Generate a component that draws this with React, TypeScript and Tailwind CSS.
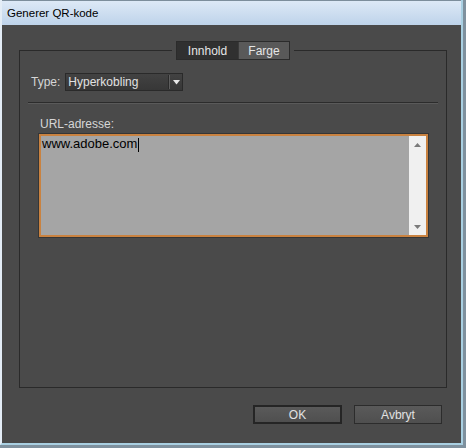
import React from "react";

export default function App() {
  return (
    <div className="w-[466px] h-[448px] bg-[#7f919e] font-['Liberation_Sans',Arial,sans-serif] text-[12px]">
      <div className="w-[463px] h-[445px] flex flex-col border-l-2 border-r-2 border-b-2 border-l-[#e4edf6] border-r-[#a9d0e2] border-b-[#a9d0e2]">
        <div className="h-[25px] shrink-0 flex items-center pl-[5px] pt-[2px] bg-gradient-to-b from-[#dde9f6] to-[#bed3ea] border-t border-t-[#7d8e9c] text-black text-[11.5px]">
          Generer QR-kode
        </div>
        <div className="flex-1 bg-[#4a4a4a] flex flex-col pt-[16px] pl-[17px] pr-[14px]">
          <fieldset className="h-[347px] border border-[#2a2a2a] text-[#d6d6d6]">
            <legend className="mx-auto px-[4px]">
              <div className="flex h-[19px] border border-[#2b2b2b]">
                <div className="w-[61px] flex items-center justify-center bg-[#303030] text-[#e6e6e6]">
                  Innhold
                </div>
                <div className="w-[51px] flex items-center justify-center bg-[#595959] border-l border-[#3a3a3a] text-[#e6e6e6]">
                  Farge
                </div>
              </div>
            </legend>
            <div className="mt-[13px] pl-[11px] flex items-center h-[18px] gap-[5px]">
              <span className="leading-[14px]">Type:</span>
              <div className="w-[118px] h-[18px] border border-[#2a2a2a] bg-gradient-to-b from-[#424242] to-[#373737] flex items-center">
                <span className="flex-1 pl-[2px] text-[#e2e2e2] leading-[14px]">Hyperkobling</span>
                <div className="w-px h-[14px] bg-[#2a2a2a]" />
                <div className="w-px h-[14px] bg-[#5e5e5e]" />
                <div className="w-[12px] flex items-center justify-center">
                  <svg width="7" height="5" viewBox="0 0 7 5">
                    <path d="M0 0 L7 0 L3.5 4.5 Z" fill="#e8e8e8" />
                  </svg>
                </div>
              </div>
            </div>
            <div className="mt-[11px] mx-[8px] h-[2px] border-t border-t-[#2c2c2c] border-b border-b-[#5a5a5a]" />
            <div className="mt-[13px] pl-[20px] leading-[14px]">URL-adresse:</div>
            <div className="mt-[2px] ml-[18px] w-[391px] h-[105px] border border-[#363636]">
              <div className="w-full h-full border-2 border-[#c98240] flex">
                <div className="flex-1 bg-[#a5a5a5] text-black text-[13px] leading-[15px] pl-[1px]">
                  www.adobe.com
                  <span className="inline-block w-px h-[14px] bg-black align-middle ml-[1px]" />
                </div>
                <div className="w-[17px] bg-[#f0f0f0] flex flex-col items-center justify-between pt-[7px] pb-[6px]">
                  <svg width="7" height="4" viewBox="0 0 7 4">
                    <path d="M0 4 L7 4 L3.5 0 Z" fill="#7a7a7a" />
                  </svg>
                  <svg width="7" height="4" viewBox="0 0 7 4">
                    <path d="M0 0 L7 0 L3.5 4 Z" fill="#7a7a7a" />
                  </svg>
                </div>
              </div>
            </div>
          </fieldset>
          <div className="flex justify-end gap-[12px] mt-[17px] pr-[5px]">
            <button className="w-[89px] h-[19px] border-2 border-[#252525] bg-gradient-to-b from-[#5a5a5a] to-[#4f4f4f] text-[#e2e2e2] flex items-center justify-center leading-[14px]">
              OK
            </button>
            <button className="w-[88px] h-[19px] border border-[#2c2c2c] bg-gradient-to-b from-[#5a5a5a] to-[#4f4f4f] text-[#e2e2e2] flex items-center justify-center leading-[14px]">
              Avbryt
            </button>
          </div>
        </div>
      </div>
    </div>
  );
}
